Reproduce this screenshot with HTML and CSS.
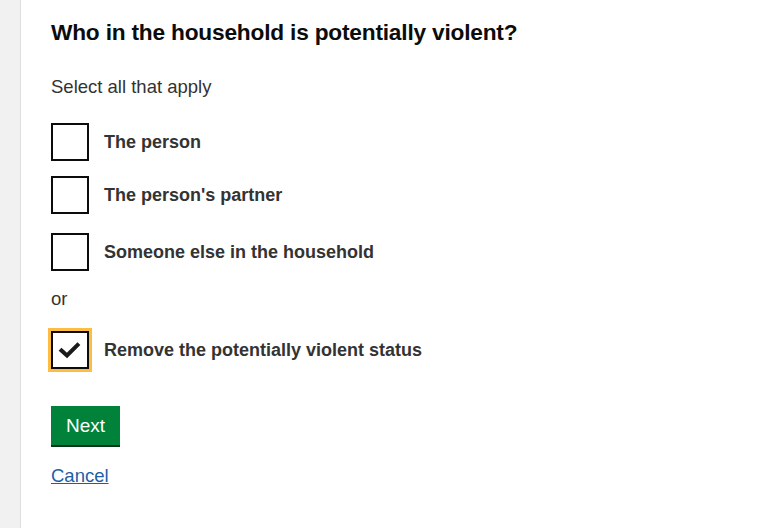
FILE: index.html
```html
<!DOCTYPE html>
<html lang="en">
<head>
<meta charset="utf-8">
<title>Potentially violent</title>
<link rel="stylesheet" href="styles.css">
</head>
<body>
<div class="page">
  <div class="side"></div>
  <main class="main">
    <h1 class="title">Who in the household is potentially violent?</h1>
    <p class="hint">Select all that apply</p>
    <div class="options">
      <label class="option"><span class="box"></span><span class="label">The person</span></label>
      <label class="option"><span class="box"></span><span class="label">The person's partner</span></label>
      <label class="option option-last"><span class="box"></span><span class="label">Someone else in the household</span></label>
    </div>
    <p class="or">or</p>
    <label class="option option-focus"><span class="box box-focus"><svg class="tick" width="24" height="20" viewBox="0 0 24 20"><path d="M3.5 10.5 L9 15.5 L19.5 5" fill="none" stroke="#1a1a1a" stroke-width="4" stroke-linecap="square"/></svg></span><span class="label">Remove the potentially violent status</span></label>
    <button class="btn">Next</button>
    <a class="link" href="#">Cancel</a>
  </main>
</div>
</body>
</html>
```
FILE: styles.css
```css
html, body { margin: 0; padding: 0; background: #fff; }
body { font-family: "Liberation Sans", Arial, sans-serif; color: #0b0c0c; }
.page { display: flex; min-height: 528px; }
.side { width: 20px; flex: none; background: #f1f1f1; border-right: 1px solid #dedede; }
.main { padding: 18px 0 0 30px; display: flex; flex-direction: column; align-items: flex-start; }
.title { font-size: 22.7px; font-weight: 700; line-height: 28px; margin: 0 0 29px; letter-spacing: -0.2px; }
.hint { font-size: 18.5px; line-height: 24px; color: #333; margin: 0 0 24px; }
.options { display: flex; flex-direction: column; gap: 15px; }
.option { display: flex; align-items: center; gap: 15px; cursor: pointer; }
.option-last { margin-top: 4px; }
.box { width: 34px; height: 34px; border: 2px solid #0b0c0c; display: flex; align-items: center; justify-content: center; flex: none; }
.label { font-size: 18px; font-weight: 700; color: #333; line-height: 24px; }
.or { font-size: 18.5px; line-height: 24px; color: #333; margin: 16px 0 20px; }
.option-focus { margin-left: -3px; }
.box-focus { border: 2px solid #0b0c0c; box-shadow: 0 0 0 3px #fdbd45; margin-left: 3px; }
.tick { display: block; }
.btn { margin-top: 37px; background: #00823b; color: #fff; border: 0; box-shadow: 0 2px 0 #003618; font-family: inherit; font-size: 19px; line-height: 24px; padding: 8px 15px 7px; cursor: pointer; }
.link { margin-top: 19px; font-size: 18.5px; line-height: 24px; color: #1d5fa4; text-decoration: underline; }
```
